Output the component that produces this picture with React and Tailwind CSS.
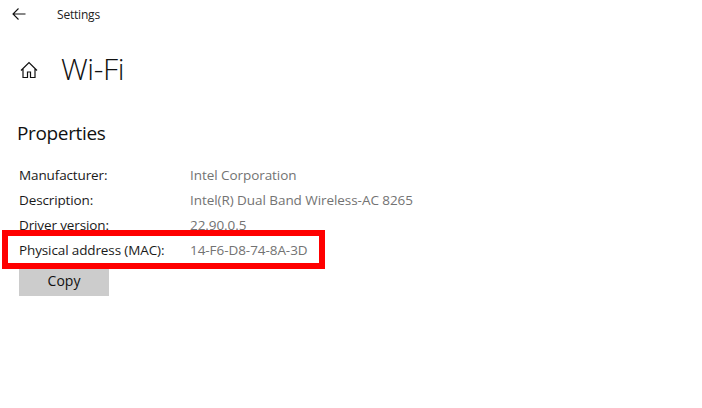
import React from "react";

const rows = [
  ["Manufacturer:", "Intel Corporation"],
  ["Description:", "Intel(R) Dual Band Wireless-AC 8265"],
  ["Driver version:", "22.90.0.5"],
  ["Physical address (MAC):", "14-F6-D8-74-8A-3D"],
];

const App = () => {
  return (
    <div className="relative w-[702px] h-[408px] overflow-hidden bg-white text-black font-['Open_Sans',sans-serif]">
      {/* Title bar */}
      <div className="flex items-center h-[30px] pl-[12px]">
        <svg className="-mt-[2px]" width="14" height="14" viewBox="0 0 14 14" fill="none" stroke="#111" strokeWidth="1.1">
          <path d="M13.5 7H1M6.5 1.5L1 7l5.5 5.5" />
        </svg>
        <span className="ml-[31px] text-[12px] leading-[30px] tracking-[-0.2px] text-[#222]">Settings</span>
      </div>

      {/* Page header */}
      <div className="flex items-center mt-[20px] h-[40px] pl-[20px]">
        <svg className="-mt-[1px]" width="18" height="18" viewBox="0 0 18 18" fill="none" stroke="#111" strokeWidth="1.2">
          <path d="M1 9.5L9 1.5l8 8M3 7.5V16.5h4.5V11h3v5.5H15V7.5" />
        </svg>
        <h1 className="ml-[23px] -mt-[2px] text-[30px] leading-[40px] font-light tracking-[-0.4px] text-[#111]">Wi-Fi</h1>
      </div>

      <h2 className="mt-[28px] pl-[17px] text-[19px] leading-[30px] tracking-[-0.35px] text-[#111]">Properties</h2>

      {/* Property rows */}
      <div className="mt-[15px] pl-[19px] flex flex-col">
        {rows.map(([label, value]) => (
          <div key={label} className="flex h-[25px] items-center text-[13.5px]">
            <span className="w-[171px] tracking-[-0.12px] text-[#1a1a1a]">{label}</span>
            <span className="tracking-[-0.06px] text-[#737373]">{value}</span>
          </div>
        ))}
      </div>

      <button className="block ml-[19px] w-[90px] h-[33px] pt-[2px] bg-[#cccccc] text-[14px] text-[#111]">Copy</button>

      {/* Red highlight */}
      <div className="absolute left-[2px] top-[230px] w-[323px] h-[39px] border-[6px] border-[#ff0000]" />
    </div>
  );
};

export default App;
